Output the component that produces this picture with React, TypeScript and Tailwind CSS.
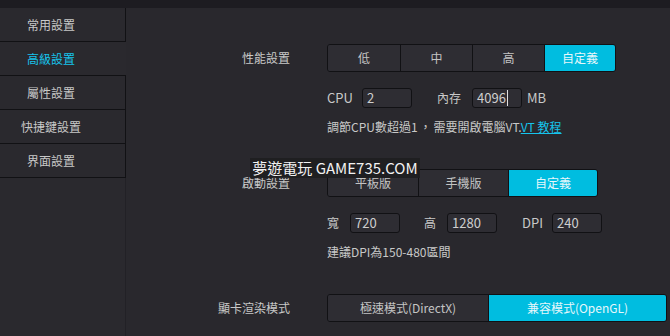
import React from "react";

const font = { fontFamily: '"Noto Sans CJK TC", "Noto Sans", sans-serif' };

function Seg({ items, widths, active }: { items: string[]; widths: number[]; active: number }) {
  return (
    <div className="flex h-[28px] rounded-[3px] border border-[#111114] overflow-hidden">
      {items.map((t, i) => (
        <div
          key={t}
          style={{ width: widths[i] }}
          className={
            "flex items-center justify-center text-[12px] " +
            (i > 0 ? "border-l border-[#111114] " : "") +
            (i === active ? "bg-[#00bde0] text-[#e6f7fb]" : "bg-[#2e2d33] text-[#c4c4c4]")
          }
        >
          {t}
        </div>
      ))}
    </div>
  );
}

function Input({ value, caret }: { value: string; caret?: boolean }) {
  return (
    <div className="flex h-[20px] w-[50px] items-center rounded-[3px] border border-[#111114] bg-[#2e2d33] pl-[4px] text-[13px] text-[#cfcfcf]">
      <span>{value}</span>
      {caret && <span className="ml-[1px] h-[16px] w-px bg-[#e0e0e0]" />}
    </div>
  );
}

function Label({ children }: { children: React.ReactNode }) {
  return <div className="w-[164px] shrink-0 pr-0 text-right text-[12px] text-[#c8c8c8]">{children}</div>;
}

export default function App() {
  const side = ["常用設置", "高級設置", "屬性設置", "快捷鍵設置", "界面設置"];
  return (
    <div style={font} className="relative flex h-[336px] w-[670px] flex-col overflow-hidden bg-[#29282d]">
      <div className="h-[8px] shrink-0 bg-[#1d1c21]" />
      <div className="flex flex-1">
        <div className="flex w-[126px] shrink-0 flex-col bg-[#2a292e]">
          {side.map((s, i) => (
            <div
              key={s}
              className={
                "flex h-[34px] w-[126px] items-center border-b border-[#111114] " +
                (i === 1 ? "" : "border-r")
              }
            >
              <div className={"w-[102px] text-center text-[12px] " + (i === 1 ? "text-[#16c4ec]" : "text-[#c8c8c8]")}>
                {s}
              </div>
            </div>
          ))}
          <div className="flex-1 border-r border-[#222126]" />
        </div>
        <div className="flex flex-1 flex-col">
          {/* Section 1 */}
          <div className="mt-[36px] flex items-center">
            <Label>性能設置</Label>
            <div className="ml-[37px]">
              <Seg items={["低", "中", "高", "自定義"]} widths={[72, 72, 72, 71]} active={3} />
            </div>
          </div>
          <div className="ml-[201px] mt-[16px] flex items-center text-[13px] text-[#c8c8c8]">
            <span className="w-[35px]">CPU</span>
            <Input value="2" />
            <span className="ml-[25px] w-[35px] text-[12px]">內存</span>
            <Input value="4096" caret />
            <span className="ml-[5px]">MB</span>
          </div>
          <div className="ml-[201px] mt-[11px] text-[12px] leading-[16px] text-[#c8c8c8]">
            調節CPU數超過1<span className="mx-[2px]">，</span>需要開啟電腦VT.<span className="text-[#16c4ec] underline">VT 教程</span>
          </div>

          {/* Section 2 */}
          <div className="mt-[34px] flex items-center">
            <Label>啟動設置</Label>
            <div className="ml-[37px]">
              <Seg items={["平板版", "手機版", "自定義"]} widths={[90, 90, 89]} active={2} />
            </div>
          </div>
          <div className="ml-[201px] mt-[16px] flex items-center text-[13px] text-[#c8c8c8]">
            <span className="w-[23px] text-[12px]">寬</span>
            <Input value="720" />
            <span className="ml-[24px] w-[23px] text-[12px]">高</span>
            <Input value="1280" />
            <span className="ml-[25px] w-[30px]">DPI</span>
            <Input value="240" />
          </div>
          <div className="ml-[201px] mt-[11px] text-[12px] leading-[16px] text-[#c8c8c8]">建議DPI為150-480區間</div>

          {/* Section 3 */}
          <div className="mt-[34px] flex items-center">
            <Label>顯卡渲染模式</Label>
            <div className="ml-[37px]">
              <Seg items={["極速模式(DirectX)", "兼容模式(OpenGL)"]} widths={[160, 178]} active={1} />
            </div>
          </div>
          <div className="ml-[201px] mt-[13px] whitespace-nowrap text-[12px] leading-[16px] text-[#c8c8c8]">
            如果出現遊戲閃退、黑屏等問題，請嘗試切換渲染模式
          </div>
        </div>
      </div>

      {/* watermark */}
      <div className="absolute left-[250px] top-[158px] flex h-[20px] w-[170px] items-center justify-center bg-[#1e1e20]/90 text-[15px] text-[#f2f2f2]">
        夢遊電玩 GAME735.COM
      </div>
    </div>
  );
}
